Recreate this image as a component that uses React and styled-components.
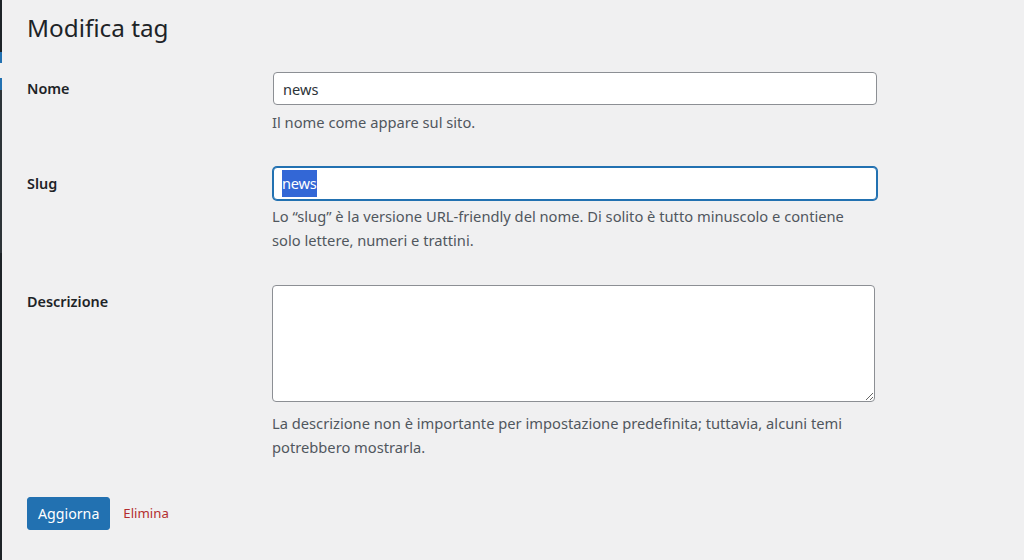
import React from "react";
import styled, { createGlobalStyle } from "styled-components";

const GlobalStyle = createGlobalStyle`
  html, body {
    margin: 0;
    padding: 0;
    background: #f0f0f1;
  }
  body {
    font-family: "Noto Sans", "Open Sans", sans-serif;
    color: #1d2327;
    -webkit-font-smoothing: antialiased;
  }
`;

const Page = styled.div`
  display: flex;
  min-height: 560px;
  overflow: hidden;
`;

const AdminEdge = styled.div`
  width: 2px;
  flex-shrink: 0;
  display: flex;
  flex-direction: column;
  background: #1d2327;
`;

const EdgePart = styled.div`
  height: ${(p) => p.$h}px;
  background: ${(p) => p.$color};
  flex-shrink: 0;
`;

const Content = styled.main`
  flex: 1;
  padding: 0 25px;
`;

const Title = styled.h1`
  margin: 11px 0 0;
  font-size: 24.3px;
  font-weight: 400;
  line-height: 34px;
  color: #1d2327;
`;

const Form = styled.form`
  display: flex;
  flex-direction: column;
  gap: 32px;
  margin-top: 27px;
`;

const Row = styled.div`
  display: grid;
  grid-template-columns: 246px 604px;
  align-items: start;
`;

const Label = styled.label`
  font-size: 14.4px;
  font-weight: 600;
  line-height: 34px;
  color: #1d2327;
`;

const Field = styled.div`
  display: flex;
  flex-direction: column;
`;

const TextInput = styled.input`
  box-sizing: border-box;
  width: 604px;
  height: 33px;
  margin: 0;
  padding: 0 9px;
  border: 1px solid #8c8f94;
  border-radius: 4px;
  background: #fff;
  font-family: inherit;
  font-size: 14.6px;
  color: #2c3338;
  outline: none;
`;

const FocusedInput = styled.div`
  box-sizing: border-box;
  width: 604px;
  height: 33px;
  padding: 2px 8px;
  display: flex;
  align-items: stretch;
  border: 1px solid #2271b1;
  border-radius: 4px;
  box-shadow: 0 0 0 1px #2271b1;
  background: #fff;
  font-size: 14.6px;
`;

const Selected = styled.span`
  display: flex;
  align-items: center;
  background: #3367d6;
  color: #fff;
  letter-spacing: -0.2px;
`;

const TextArea = styled.textarea`
  display: block;
  box-sizing: border-box;
  width: 603px;
  height: 117px;
  margin: 0 0 0 -1px;
  padding: 2px 8px;
  border: 1px solid #8c8f94;
  border-radius: 4px;
  background: #fff;
  font-family: inherit;
  font-size: 14.6px;
  outline: none;
`;

const Help = styled.p`
  margin: ${(p) => p.$gap}px 0 0 -1px;
  font-size: 14.7px;
  line-height: 24.5px;
  color: #50575e;
  width: 592px;
`;

const Actions = styled.div`
  display: flex;
  align-items: center;
  gap: 13px;
  margin-top: 37px;
`;

const Button = styled.button`
  box-sizing: border-box;
  height: 33px;
  padding: 0 10px;
  border: 1px solid #2271b1;
  border-radius: 3px;
  background: #2271b1;
  color: #fff;
  font-family: inherit;
  font-size: 14.2px;
  cursor: pointer;
`;

const DeleteLink = styled.a`
  color: #b32d2e;
  font-size: 13.2px;
  text-decoration: none;
`;

export default function App() {
  return (
    <>
      <GlobalStyle />
      <Page>
        <AdminEdge>
          <EdgePart $h={52} $color="#1d2327" />
          <EdgePart $h={11} $color="#2271b1" />
          <EdgePart $h={15} $color="#f0f0f1" />
          <EdgePart $h={12} $color="#2271b1" />
          <EdgePart $h={163} $color="#2c3338" />
        </AdminEdge>
        <Content>
          <Title>Modifica tag</Title>
          <Form onSubmit={(e) => e.preventDefault()}>
            <Row>
              <Label htmlFor="name">Nome</Label>
              <Field>
                <TextInput id="name" defaultValue="news" />
                <Help $gap={5}>Il nome come appare sul sito.</Help>
              </Field>
            </Row>
            <Row>
              <Label>Slug</Label>
              <Field>
                <FocusedInput>
                  <Selected>news</Selected>
                </FocusedInput>
                <Help $gap={4}>
                  Lo “slug” è la versione URL-friendly del nome. Di solito è
                  tutto minuscolo e contiene solo lettere, numeri e trattini.
                </Help>
              </Field>
            </Row>
            <Row>
              <Label htmlFor="description">Descrizione</Label>
              <Field>
                <TextArea id="description" />
                <Help $gap={9}>
                  La descrizione non è importante per impostazione
                  predefinita; tuttavia, alcuni temi potrebbero mostrarla.
                </Help>
              </Field>
            </Row>
          </Form>
          <Actions>
            <Button type="button">Aggiorna</Button>
            <DeleteLink href="#">Elimina</DeleteLink>
          </Actions>
        </Content>
      </Page>
    </>
  );
}
